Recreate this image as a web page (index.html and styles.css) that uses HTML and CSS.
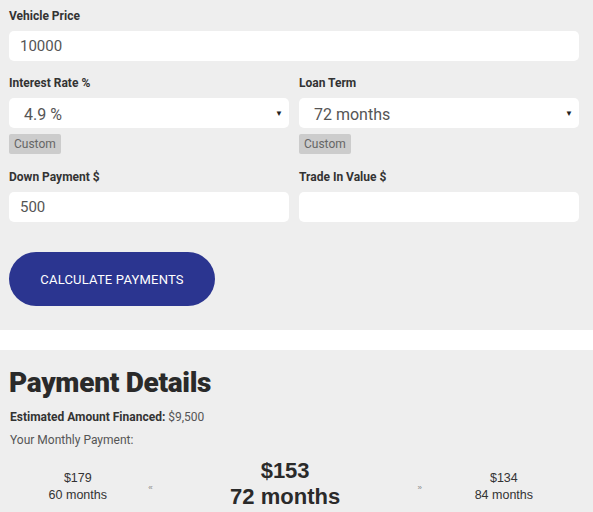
FILE: index.html
```html
<!DOCTYPE html>
<html>
<head>
<meta charset="utf-8">
<link rel="stylesheet" href="styles.css">
</head>
<body>
<div class="form">
  <div class="field">
    <label class="label">Vehicle Price</label>
    <div class="input">10000</div>
  </div>
  <div class="row">
    <div class="field">
      <label class="label">Interest Rate %</label>
      <div class="input select"><span class="val">4.9 %</span><span class="caret">▼</span></div>
      <span class="custom">Custom</span>
    </div>
    <div class="field">
      <label class="label">Loan Term</label>
      <div class="input select"><span class="val">72 months</span><span class="caret">▼</span></div>
      <span class="custom">Custom</span>
    </div>
  </div>
  <div class="row">
    <div class="field">
      <label class="label">Down Payment $</label>
      <div class="input">500</div>
    </div>
    <div class="field">
      <label class="label">Trade In Value $</label>
      <div class="input"></div>
    </div>
  </div>
  <button class="calc">CALCULATE PAYMENTS</button>
</div>
<div class="strip"></div>
<div class="details">
  <h2 class="title">Payment Details</h2>
  <p class="financed"><b>Estimated Amount Financed:</b> $9,500</p>
  <p class="monthly">Your Monthly Payment:</p>
  <div class="payments">
    <div class="pay small"><div>$179</div><div>60 months</div></div>
    <div class="arrow">«</div>
    <div class="pay big"><div>$153</div><div>72 months</div></div>
    <div class="arrow">»</div>
    <div class="pay small"><div>$134</div><div>84 months</div></div>
  </div>
</div>
</body>
</html>
```
FILE: styles.css
```css
html, body { margin: 0; padding: 0; background: #eeeeee; }
body { font-family: "Roboto", "Liberation Sans", sans-serif; color: #333; width: 593px; height: 512px; overflow: hidden; }
.form { padding: 9px 14px 24px 9px; display: flex; flex-direction: column; }
.field { display: flex; flex-direction: column; flex: 1; min-width: 0; }
.label { font-size: 12px; font-weight: 700; color: #333; height: 15px; line-height: 15px; margin-bottom: 7px; }
.input { height: 30px; background: #fff; border-radius: 5px; box-sizing: border-box; padding: 0 11px; font-size: 15px; line-height: 31px; color: #555; margin-bottom: 15px; }
.select { display: flex; justify-content: space-between; align-items: center; padding: 0 6px 0 15px; margin-bottom: 6px; }
.select .val { font-size: 16px; padding-top: 2px; }
.caret { font-size: 8px; color: #222; }
.row { display: flex; gap: 10px; }
.row .field { flex: 1; }
.custom { align-self: flex-start; background: #cccccc; color: #666; font-size: 12px; line-height: 20px; height: 20px; padding: 0 5px; border-radius: 2px; margin-bottom: 16px; }
.calc { align-self: flex-start; margin-top: 15px; width: 206px; height: 54px; border-radius: 27px; background: #2b3590; color: #fff; border: 0; font-family: "Roboto", sans-serif; font-size: 13px; font-weight: 400; letter-spacing: 0.2px; }
.strip { height: 20px; background: #ffffff; }
.details { padding: 16px 9px 0 9px; }
.title { margin: 0; font-size: 28px; font-weight: 900; color: #2a2a2a; line-height: 34px; letter-spacing: -0.3px; }
.financed { margin: 10px 0 0 1px; font-size: 12px; color: #555; line-height: 15px; }
.financed b { color: #333; }
.monthly { margin: 8px 0 0 1px; font-size: 12px; color: #555; line-height: 15px; }
.payments { display: flex; align-items: center; margin-top: 10px; font-family: "Liberation Sans", Arial, sans-serif; }
.pay { text-align: center; }
.small { font-size: 12.5px; line-height: 17px; color: #333; margin-top: 6px; }
.pay.small:first-child { width: 139px; }
.pay.small:last-child { width: 162px; }
.big { width: 264px; font-size: 22px; font-weight: 700; line-height: 26px; color: #2a2a2a; }
.arrow { width: 8px; text-align: center; font-size: 8px; color: #888; margin-top: 6px; }
```
